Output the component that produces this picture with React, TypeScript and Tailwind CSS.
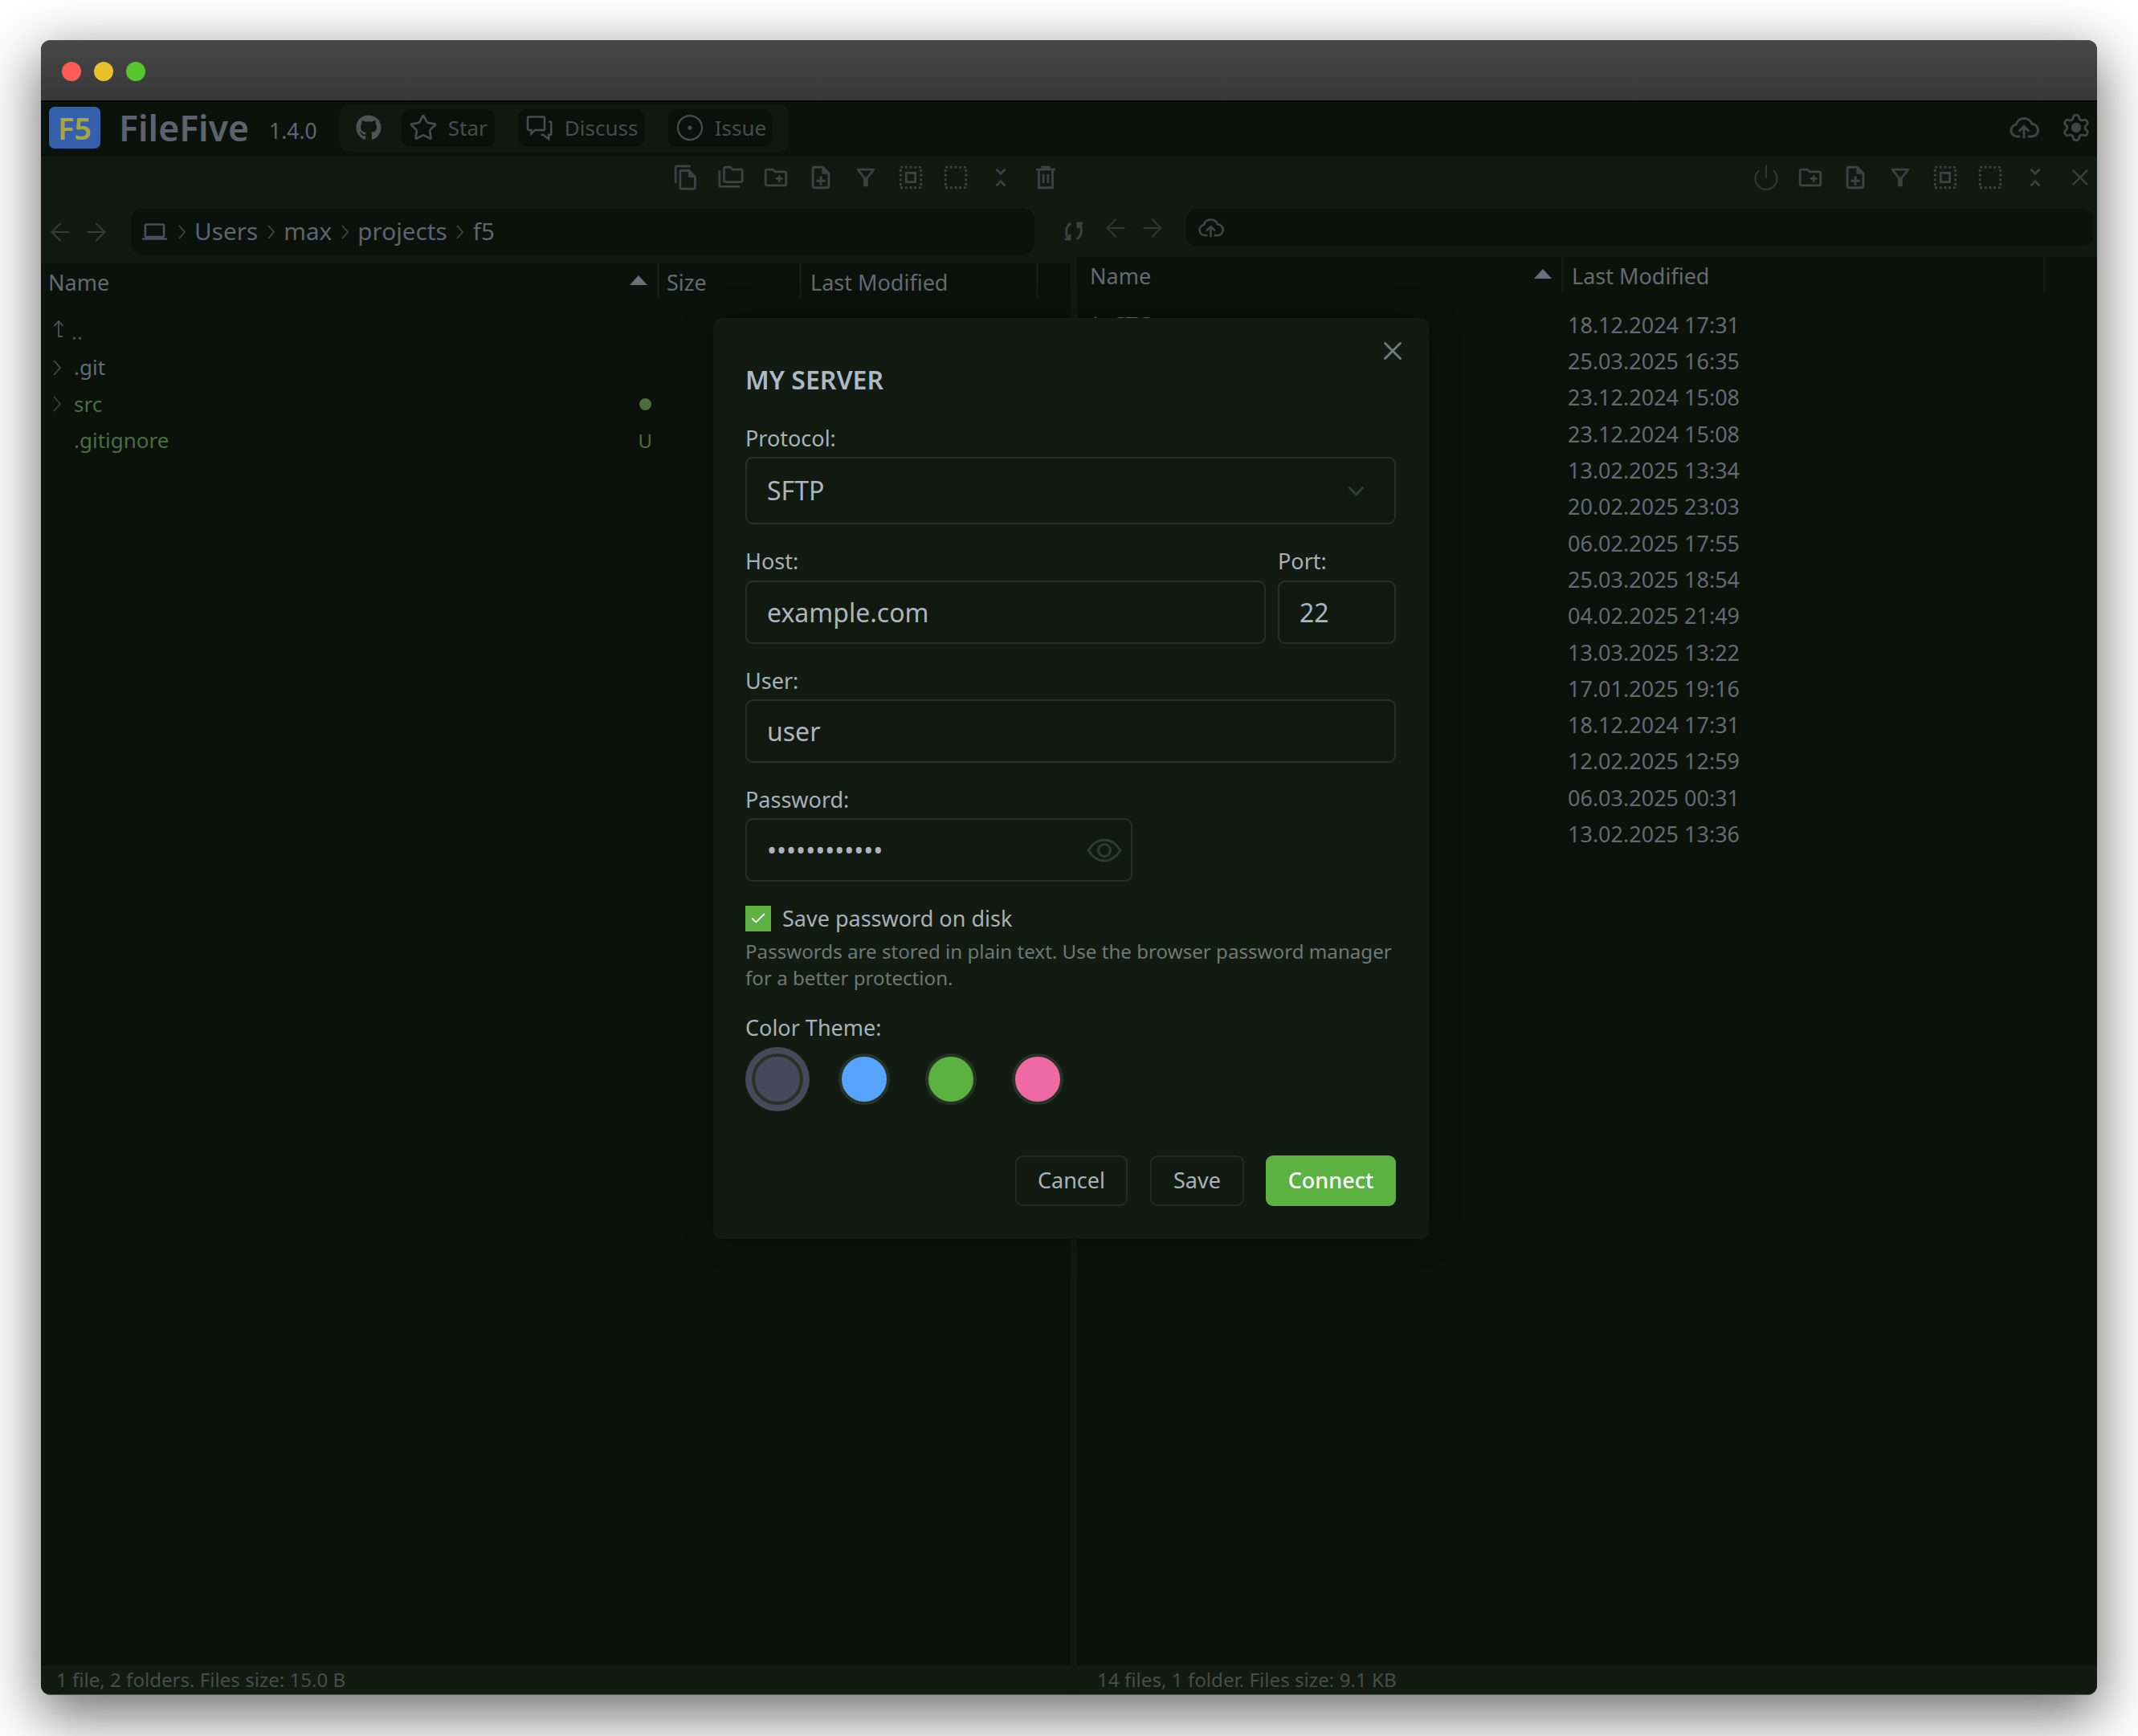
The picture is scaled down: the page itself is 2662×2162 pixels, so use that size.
import type { ReactNode } from 'react';
import { ArrowLeft, ArrowRight, Check, CircleDot, Power, Settings, Star, X } from 'lucide-react';
import { FaGithub } from 'react-icons/fa';
import {
  MdOutlineCreateNewFolder,
  MdOutlineFileCopy,
  MdOutlineFilterAlt,
  MdOutlineFolderCopy,
  MdOutlineLaptop,
  MdOutlineNoteAdd,
  MdUnfoldLess,
} from 'react-icons/md';

const dates = [
  '18.12.2024 17:31',
  '25.03.2025 16:35',
  '23.12.2024 15:08',
  '23.12.2024 15:08',
  '13.02.2025 13:34',
  '20.02.2025 23:03',
  '06.02.2025 17:55',
  '25.03.2025 18:54',
  '04.02.2025 21:49',
  '13.03.2025 13:22',
  '17.01.2025 19:16',
  '18.12.2024 17:31',
  '12.02.2025 12:59',
  '06.03.2025 00:31',
  '13.02.2025 13:36',
];

const Chevron = ({ className }: { className: string }) => (
  <svg width="12" height="20" viewBox="0 0 12 20" fill="none" stroke="currentColor" strokeWidth="1.8" className={className}>
    <path d="M2 1l8 9-8 9" />
  </svg>
);

const UpArrow = ({ className }: { className: string }) => (
  <svg width="14" height="22" viewBox="0 0 14 22" fill="none" stroke="currentColor" strokeWidth="1.8" className={className}>
    <path d="M1.5 7L7 1l5.5 6M7 1v19h5" />
  </svg>
);

const Trash = () => (
  <svg width="34" height="34" viewBox="0 0 24 24" fill="none" stroke="currentColor" strokeWidth="2">
    <path d="M3.5 5h17M9 5V3h6v2M6 5v16h12V5M10 9v8M14 9v8" />
  </svg>
);

const Selection = ({ inner }: { inner?: boolean }) => (
  <svg width="34" height="34" viewBox="0 0 24 24" fill="none" stroke="currentColor" strokeWidth="2">
    <rect x="3" y="3" width="18" height="18" strokeDasharray="2 2" />
    {inner && <rect x="8" y="8" width="8" height="8" />}
  </svg>
);

const CloudUp = ({ size, className }: { size: number; className?: string }) => (
  <svg width={size} height={size} viewBox="0 0 24 24" fill="none" stroke="currentColor" strokeWidth="1.9" className={className}>
    <path d="M9 19H6.5a4.8 4.8 0 0 1-.7-9.5A6.5 6.5 0 0 1 18.2 9 5 5 0 0 1 18 19h-3" />
    <path d="M12 20.5V11.5M8 15l4-4 4 4" />
  </svg>
);

const Triangle = () => (
  <svg width="22" height="12" viewBox="0 0 22 12" className="text-[#6a717b]" fill="currentColor">
    <path d="M11 0l11 12H0z" />
  </svg>
);

const Sort = ({ label }: { label: string }) => (
  <div className="flex flex-1 items-center justify-between">
    <span>{label}</span>
    <span className="pr-[12px] pb-[5px]">
      <Triangle />
    </span>
  </div>
);

const Sep = () => <div className="h-[45px] w-[3px] shrink-0 bg-[#131c13]" />;

const Crumb = ({ children }: { children: ReactNode }) => (
  <>
    <Chevron className="h-[18px] w-[11px] text-[#3f464b]" />
    <span>{children}</span>
  </>
);

const Pill = ({ width, icon, label }: { width: string; icon: ReactNode; label: string }) => (
  <div className={`flex h-[47px] items-center gap-[13px] rounded-[12px] bg-[#0a110b] pl-[9px] text-[26px] text-[#454b50] ${width}`}>
    {icon}
    <span>{label}</span>
  </div>
);

const Label = ({ children, className = '' }: { children: ReactNode; className?: string }) => (
  <div className={`h-[36px] text-[27px] leading-[36px] text-[#a7b1b8] ${className}`}>{children}</div>
);

const Field = ({ children, className }: { children: ReactNode; className: string }) => (
  <div className={`flex items-center rounded-[9px] border-2 border-[#263226] bg-[#111a11] pl-[25px] text-[32px] text-[#aab5c0] ${className}`}>
    {children}
  </div>
);

const Swatch = ({ color, selected }: { color: string; selected?: boolean }) => (
  <div className={`h-[64px] w-[64px] rounded-full border-[4px] border-[#263226] ${color} ${selected ? 'ring-[8px] ring-[#454a5b]' : ''}`} />
);

const Dialog = () => (
  <div className="absolute left-[837px] top-[346px] flex w-[891px] flex-col rounded-[10px] bg-[#121b12] pb-[41px] pl-[40px] pr-[41px] pt-[57px] shadow-[0_0_40px_rgba(0,0,0,0.25)]">
    <X size={38} strokeWidth={1.8} className="absolute right-[26px] top-[22px] text-[#6f7c7c]" />
    <div className="h-[40px] text-[32px] font-semibold leading-[40px] text-[#adb9c7]">MY SERVER</div>

    <Label className="mt-[35px]">Protocol:</Label>
    <Field className="mt-[5px] h-[84px] justify-between pr-[37px]">
      <span>SFTP</span>
      <svg width="21" height="13" viewBox="0 0 21 13" fill="none" stroke="#2e3d2e" strokeWidth="3">
        <path d="M1.5 1.5l9 9.5 9-9.5" />
      </svg>
    </Field>

    <div className="mt-[28px] flex gap-[15px]">
      <div className="flex-1">
        <Label>Host:</Label>
        <Field className="mt-[6px] h-[79px]">example.com</Field>
      </div>
      <div className="w-[147px]">
        <Label>Port:</Label>
        <Field className="mt-[6px] h-[79px]">22</Field>
      </div>
    </div>

    <Label className="mt-[28px]">User:</Label>
    <Field className="mt-[5px] h-[79px]">user</Field>

    <Label className="mt-[28px]">Password:</Label>
    <Field className="mt-[5px] h-[79px] w-[482px] justify-between pr-[11px]">
      <span>••••••••••••</span>
      <svg width="44" height="30" viewBox="0 0 44 30" fill="none" stroke="#2d3d2c" strokeWidth="3">
        <path d="M2 15C8 5.500 15 2 22 2s14 3.500 20 13c-6 9.500-13 13-20 13S8 24.500 2 15z" />
        <circle cx="22" cy="15" r="7.500" />
      </svg>
    </Field>

    <div className="mt-[30px] flex h-[32px] items-center gap-[14px] text-[27px] text-[#a7b1b8]">
      <div className="flex h-[32px] w-[32px] items-center justify-center bg-[#5cb240]">
        <Check size={22} strokeWidth={2} className="text-white" />
      </div>
      <span>Save password on disk</span>
    </div>
    <p className="mt-[9px] text-[24.150px] leading-[32.500px] text-[#6c7878]">
      Passwords are stored in plain text. Use the browser password manager
      <br />
      for a better protection.
    </p>

    <Label className="mt-[28px]">Color Theme:</Label>
    <div className="ml-[8px] mt-[14px] flex gap-[44px]">
      <Swatch color="bg-[#444a5b]" selected />
      <Swatch color="bg-[#56a4fd]" />
      <Swatch color="bg-[#5cb240]" />
      <Swatch color="bg-[#ef69a5]" />
    </div>

    <div className="mt-[63px] flex h-[63px] justify-end text-[27px]">
      <div className="flex w-[140px] items-center justify-center rounded-[9px] border-2 border-[#222c22] text-[#a7b3b8]">Cancel</div>
      <div className="ml-[28px] flex w-[117px] items-center justify-center rounded-[9px] border-2 border-[#222c22] text-[#a7b3b8]">Save</div>
      <div className="ml-[27px] flex w-[162px] items-center justify-center rounded-[9px] bg-[#5cb240] font-medium text-white">Connect</div>
    </div>
  </div>
);

const App = () => (
  <div className="h-[2162px] w-[2662px] overflow-hidden bg-white pl-[51px] pt-[50px] font-['Noto_Sans',sans-serif]">
    <div className="relative flex h-[2061px] w-[2560px] flex-col overflow-hidden rounded-[12px] border-b border-[#555] bg-[#0b120c] text-[27px] text-[#626a73] shadow-[0_22px_70px_4px_rgba(0,0,0,0.56)]">
      {/* Title bar */}
      <div className="flex h-[77px] shrink-0 items-center gap-[16px] border-b-2 border-[#080808] bg-gradient-to-b from-[#474747] to-[#383838] pl-[26px] pt-[2px]">
        <div className="h-[24px] w-[24px] rounded-full bg-[#fd5b56]" />
        <div className="h-[24px] w-[24px] rounded-full bg-[#e8c02a]" />
        <div className="h-[24px] w-[24px] rounded-full bg-[#57c52d]" />
      </div>

      {/* Header */}
      <div className="flex h-[68px] shrink-0 items-center pb-[4px] pl-[10px] pr-[7px]">
        <div className="flex h-[52px] w-[64px] items-center justify-center rounded-[7px] bg-[#3560ad] text-[38px] font-semibold text-[#a6a83a]">F5</div>
        <span className="ml-[23px] text-[44.500px] font-semibold text-[#5d636e]">FileFive</span>
        <span className="ml-[25px] pt-[10px] text-[26.500px] text-[#5f6670]">1.4.0</span>
        <div className="ml-[28px] flex h-[59px] items-center gap-[29px] rounded-[12px] bg-[#101910] pl-[20px] pr-[20px]">
          <FaGithub size={32} className="mr-[-4px] text-[#4d5358]" />
          <Pill width="w-[116px]" label="Star" icon={<Star size={36} strokeWidth={1.8} />} />
          <Pill
            width="w-[158px]"
            label="Discuss"
            icon={
              <svg width="36" height="36" viewBox="0 0 24 24" fill="none" stroke="currentColor" strokeWidth="1.7">
                <path d="M3 3h12a1 1 0 0 1 1 1v9a1 1 0 0 1-1 1H8l-3 3v-3H3a1 1 0 0 1-1-1V4a1 1 0 0 1 1-1zM19.500 7h1a1 1 0 0 1 1 1v9a1 1 0 0 1-1 1h-1v3.500L15 18h-2" />
              </svg>
            }
          />
          <Pill width="w-[130px]" label="Issue" icon={<CircleDot size={36} strokeWidth={1.5} />} />
        </div>
        <div className="flex flex-1 items-center justify-end gap-[27px] text-[#3e4447]">
          <CloudUp size={38} />
          <Settings size={38} strokeWidth={1.8}>
            <circle cx="12" cy="12" r="3" fill="currentColor" />
          </Settings>
        </div>
      </div>

      {/* Panes */}
      <div className="flex min-h-0 flex-1">
        <div className="flex w-[1282px] flex-col">
          <div className="h-[133px] shrink-0 bg-[#111a11]">
            <div className="flex h-[52px] items-center justify-end gap-[22px] pr-[14px] text-[#3b4144]">
              <MdOutlineFileCopy size={34} />
              <MdOutlineFolderCopy size={34} />
              <MdOutlineCreateNewFolder size={34} />
              <MdOutlineNoteAdd size={34} />
              <MdOutlineFilterAlt size={34} />
              <Selection inner />
              <Selection />
              <MdUnfoldLess size={34} />
              <Trash />
            </div>
            <div className="mt-[13px] flex h-[57px] items-center pl-[6px]">
              <ArrowLeft size={36} strokeWidth={1.4} className="text-[#363d3d]" />
              <ArrowRight size={36} strokeWidth={1.4} className="ml-[9px] text-[#363d3d]" />
              <div className="ml-[25px] flex h-[57px] w-[1125px] items-center gap-[10.500px] rounded-[14px] bg-[#0b120c] pl-[14px] text-[29.700px] text-[#5b6470]">
                <MdOutlineLaptop size={31} className="mr-[2px] text-[#4a5058]" />
                <Crumb>Users</Crumb>
                <Crumb>max</Crumb>
                <Crumb>projects</Crumb>
                <Crumb>f5</Crumb>
              </div>
            </div>
          </div>

          <div className="flex h-[47px] shrink-0 items-start pl-[9px] leading-[47px]">
            <Sort label="Name" />
            <Sep />
            <span className="w-[174px] pl-[9px]">Size</span>
            <Sep />
            <span className="w-[292px] pl-[11px]">Last Modified</span>
            <Sep />
            <div className="w-[40px]" />
          </div>

          <div className="mt-[15px] flex flex-col pr-[521px] text-[26px]">
            <div className="flex h-[45.300px] items-center pl-[15px] text-[#4d5358]">
              <UpArrow className="mb-[6px] mr-[9px]" />
              <span className="leading-none">..</span>
            </div>
            <div className="flex h-[45.300px] items-center pl-[14px] text-[#626a73]">
              <Chevron className="mr-[15px] text-[#434a4d]" />
              <span>.git</span>
            </div>
            <div className="flex h-[45.300px] items-center justify-between pl-[14px] text-[#486f3c]">
              <div className="flex items-center">
                <Chevron className="mr-[15px] text-[#2e4a2a]" />
                <span>src</span>
              </div>
              <div className="mr-[1px] h-[15px] w-[15px] rounded-full bg-[#486f3c]" />
            </div>
            <div className="flex h-[45.300px] items-center justify-between pl-[41px] text-[#486f3c]">
              <span>.gitignore</span>
              <span className="text-[24px]">U</span>
            </div>
          </div>

          <div className="mt-auto flex h-[36px] shrink-0 items-center bg-[#121a12] pl-[19px] text-[24.100px] text-[#474c4c]">1 file, 2 folders. Files size: 15.0 B</div>
        </div>

        <div className="relative w-[8px] shrink-0 bg-[#111a11]">
          <svg width="30" height="30" viewBox="0 0 24 24" fill="none" stroke="#3b4244" strokeWidth="2.400" className="absolute left-[-11px] top-[78px]">
            <path d="M9 4C4 7 3 15 7 20M15 20c5-3 6-11 2-16M3 20h5v-5M21 4h-5v5" />
          </svg>
        </div>

        <div className="flex w-[1270px] flex-col">
          <div className="h-[125px] shrink-0 bg-[#111a11]">
            <div className="flex h-[52px] items-center justify-end gap-[22px] pr-[4px] text-[#3b4144]">
              <Power size={36} strokeWidth={1.2} className="mr-[-2px] text-[#343b3c]" />
              <MdOutlineCreateNewFolder size={34} />
              <MdOutlineNoteAdd size={34} />
              <MdOutlineFilterAlt size={34} />
              <Selection inner />
              <Selection />
              <MdUnfoldLess size={34} />
              <X size={34} strokeWidth={1.7} />
            </div>
            <div className="mt-[13px] flex h-[47px] items-center pl-[30px]">
              <ArrowLeft size={36} strokeWidth={1.4} className="text-[#2f3635]" />
              <ArrowRight size={36} strokeWidth={1.4} className="ml-[10px] text-[#2f3635]" />
              <div className="ml-[24px] flex h-[47px] w-[1130px] items-center rounded-[14px] bg-[#0b120c] pl-[14px]">
                <CloudUp size={33} className="text-[#3f4548]" />
              </div>
            </div>
          </div>

          <div className="flex h-[45px] shrink-0 items-start pl-[16px] leading-[47px]">
            <Sort label="Name" />
            <Sep />
            <span className="w-[597px] pl-[10px]">Last Modified</span>
            <Sep />
            <div className="w-[64px]" />
          </div>

          <div className="mt-[17.500px] flex flex-col">
            {dates.map((d, i) => (
              <div key={i} className="flex h-[45.300px] items-center">
                <div className="flex w-[611px] items-center pl-[16px]">
                  {i === 0 && (
                    <>
                      <UpArrow className="mr-[16px] text-[#4d5358]" />
                      <span>STC</span>
                    </>
                  )}
                </div>
                <span>{d}</span>
              </div>
            ))}
          </div>

          <div className="mt-auto flex h-[36px] shrink-0 items-center bg-[#121a12] pl-[25px] text-[24.200px] text-[#474c4c]">14 files, 1 folder. Files size: 9.1 KB</div>
        </div>
      </div>

      <Dialog />
    </div>
  </div>
);

export default App;
